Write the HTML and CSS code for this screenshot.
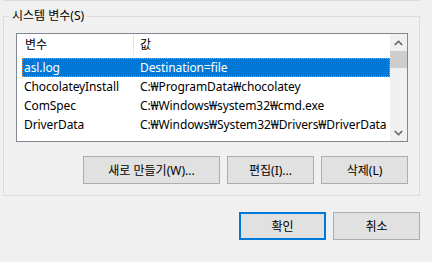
FILE: index.html
```html
<!DOCTYPE html>
<html lang="ko">
<head>
    <meta charset="UTF-8">
    <title>시스템 변수</title>
    <link rel="stylesheet" href="styles.css">
</head>
<body>
    <div class="prev-group"></div>
    <div class="group">
        <span class="legend">시스템 변수(S)</span>
        <div class="list-box">
            <div class="table">
                <div class="header">
                    <div class="col-name">변수</div>
                    <div class="col-value">값</div>
                </div>
                <div class="row selected">
                    <div class="col-name">asl.log</div>
                    <div class="col-value">Destination=file</div>
                </div>
                <div class="row">
                    <div class="col-name">ChocolateyInstall</div>
                    <div class="col-value">C:₩ProgramData₩chocolatey</div>
                </div>
                <div class="row">
                    <div class="col-name">ComSpec</div>
                    <div class="col-value">C:₩Windows₩system32₩cmd.exe</div>
                </div>
                <div class="row">
                    <div class="col-name">DriverData</div>
                    <div class="col-value">C:₩Windows₩System32₩Drivers₩DriverData</div>
                </div>
            </div>
            <div class="scrollbar">
                <div class="arrow">
                    <svg width="9" height="6" viewBox="0 0 9 6"><polyline points="0.8,5 4.5,1.3 8.2,5" fill="none" stroke="#606060" stroke-width="1.6"/></svg>
                </div>
                <div class="thumb"></div>
                <div class="track"></div>
                <div class="arrow">
                    <svg width="9" height="6" viewBox="0 0 9 6"><polyline points="0.8,1 4.5,4.7 8.2,1" fill="none" stroke="#606060" stroke-width="1.6"/></svg>
                </div>
            </div>
        </div>
        <div class="group-buttons">
            <button class="btn btn-wide">새로 만들기(W)...</button>
            <button class="btn">편집(I)...</button>
            <button class="btn">삭제(L)</button>
        </div>
    </div>
    <div class="dialog-buttons">
        <button class="btn btn-default">확인</button>
        <button class="btn">취소</button>
    </div>
</body>
</html>
```

FILE: styles.css
```css
body {
    margin: 0;
    background: #f0f0f0;
    font-family: "Noto Sans", "Noto Sans CJK KR", sans-serif;
    font-size: 12px;
    color: #000;
}
.prev-group {
    margin-left: 3px;
    width: 417px;
    border-top: 1px solid #dcdcdc;
}
.group {
    margin: 15px 0 0 3px;
    width: 415px;
    height: 178px;
    border: 1px solid #dcdcdc;
}
.legend {
    display: block;
    width: fit-content;
    height: 16px;
    margin: -9px 0 0 5px;
    padding: 0 3px;
    line-height: 16px;
    background: #f0f0f0;
}
.list-box {
    display: flex;
    margin: 9px 0 0 12px;
    width: 390px;
    height: 107px;
    border: 1px solid #828790;
    background: #fff;
    overflow: hidden;
}
.table {
    flex: 1;
    letter-spacing: -0.1px;
}
.header {
    display: flex;
    height: 24px;
}
.header .col-name {
    width: 108px;
    height: 21px;
    padding-left: 8px;
    border-right: 1px solid #e5e5e5;
    line-height: 22px;
}
.header .col-value {
    padding-left: 6px;
    line-height: 22px;
}
.row {
    display: flex;
    margin-left: 5px;
    height: 19px;
    line-height: 19px;
    white-space: nowrap;
}
.row .col-name {
    width: 109px;
    padding-left: 2px;
}
.row .col-value {
    padding-left: 7px;
}
.selected {
    background: #0078d7;
    color: #fff;
    outline: 1px dotted #ff8c2a;
    outline-offset: -1px;
}
.scrollbar {
    display: flex;
    flex-direction: column;
    width: 17px;
    background: #f0f0f0;
}
.arrow {
    display: flex;
    align-items: center;
    justify-content: center;
    height: 17px;
}
.thumb {
    height: 17px;
    background: #cdcdcd;
}
.track {
    flex: 1;
}
.group-buttons {
    display: flex;
    justify-content: flex-end;
    gap: 7px;
    margin: 14px 11px 0 0;
}
.btn {
    width: 87px;
    height: 28px;
    padding: 0;
    border: 1px solid #adadad;
    background: #e1e1e1;
    font-family: inherit;
    font-size: 12px;
    color: #000;
}
.btn-wide {
    width: 137px;
}
.btn-default {
    border: 2px solid #0078d7;
}
.dialog-buttons {
    display: flex;
    justify-content: flex-end;
    gap: 7px;
    width: 420px;
    margin-top: 16px;
}
```
